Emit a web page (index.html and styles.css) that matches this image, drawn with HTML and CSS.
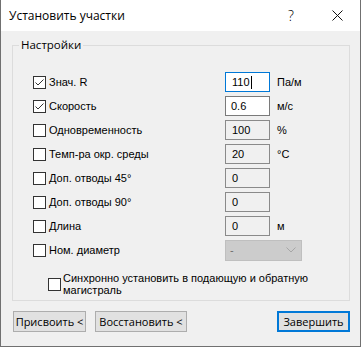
FILE: index.html
```html
<!DOCTYPE html>
<html lang="ru">
<head>
    <meta charset="UTF-8">
    <meta name="viewport" content="width=device-width, initial-scale=1.0">
    <title>Установить участки</title>
    <link rel="stylesheet" href="styles.css">
</head>
<body>

    <div class="window">
        <div class="titlebar">
            <span class="title">Установить участки</span>
            <span class="tbtn help">?</span>
            <span class="tbtn close">
                <svg width="11" height="11" viewBox="0 0 11 11"><path d="M0.5 0.5L10.5 10.5M10.5 0.5L0.5 10.5" stroke="#111" stroke-width="1" fill="none"/></svg>
            </span>
        </div>

        <div class="content">
            <fieldset class="group">
                <legend>Настройки</legend>

                <div class="grid">
                    <label class="check"><span class="box"><svg width="11" height="11" viewBox="0 0 11 11"><polyline points="1.5,5.5 4,8 9.5,2.5" stroke="#333" stroke-width="1" fill="none"/></svg></span>Знач. R</label>
                    <div class="field focused">110<span class="caret"></span></div>
                    <span class="unit">Па/м</span>

                    <label class="check"><span class="box"><svg width="11" height="11" viewBox="0 0 11 11"><polyline points="1.5,5.5 4,8 9.5,2.5" stroke="#333" stroke-width="1" fill="none"/></svg></span>Скорость</label>
                    <div class="field">0.6</div>
                    <span class="unit">м/с</span>

                    <label class="check"><span class="box"></span>Одновременность</label>
                    <div class="field disabled">100</div>
                    <span class="unit">%</span>

                    <label class="check"><span class="box"></span>Темп-ра окр. среды</label>
                    <div class="field disabled">20</div>
                    <span class="unit">°C</span>

                    <label class="check"><span class="box"></span>Доп. отводы 45°</label>
                    <div class="field disabled">0</div>
                    <span class="unit"></span>

                    <label class="check"><span class="box"></span>Доп. отводы 90°</label>
                    <div class="field disabled">0</div>
                    <span class="unit"></span>

                    <label class="check"><span class="box"></span>Длина</label>
                    <div class="field disabled">0</div>
                    <span class="unit">м</span>

                    <label class="check"><span class="box"></span>Ном. диаметр</label>
                    <div class="combo">
                        <span>-</span>
                        <svg width="10" height="6" viewBox="0 0 10 6"><polyline points="0.5,0.5 5,5 9.5,0.5" stroke="#a6a6a6" stroke-width="1" fill="none"/></svg>
                    </div>
                </div>

                <label class="check sync"><span class="box"></span><span class="sync-text">Синхронно установить в подающую и обратную магистраль</span></label>
            </fieldset>

            <div class="buttons">
                <button class="btn assign">Присвоить &lt;</button>
                <button class="btn restore">Восстановить &lt;</button>
                <button class="btn primary">Завершить</button>
            </div>
        </div>
    </div>

</body>
</html>
```

FILE: styles.css
```css
body {
    margin: 0;
    background-color: #f0f0f0;
}

.window {
    width: 361px;
    height: 347px;
    box-sizing: border-box;
    border: 1px solid #707070;
    border-top: none;
    background-color: #f0f0f0;
    font-family: "Liberation Sans", Arial, sans-serif;
    font-size: 11px;
    color: #000;
}

.titlebar {
    height: 31px;
    background-color: #fff;
    display: flex;
    align-items: center;
    padding-left: 8px;
}

.title {
    font-family: "Open Sans", "Noto Sans", sans-serif;
    font-size: 12px;
    margin-right: auto;
}

.tbtn {
    width: 46px;
    height: 31px;
    display: flex;
    align-items: center;
    justify-content: center;
}

.help {
    font-family: "Open Sans", sans-serif;
    font-size: 14px;
    font-weight: 300;
}

.close svg {
    display: block;
}

.content {
    padding: 6px 10px 0 11px;
}

.group {
    margin: 0;
    padding: 19px 0 4px 0;
    border: 1px solid #dcdcdc;
    min-width: 0;
}

.group legend {
    font-family: "Open Sans", "Noto Sans", sans-serif;
    font-size: 11.5px;
    line-height: 16px;
    padding: 0 2px;
    margin-left: 6px;
}

.grid {
    display: grid;
    grid-template-columns: 192px 45px auto;
    grid-auto-rows: 20px;
    row-gap: 4px;
    align-items: center;
    margin-left: 20px;
}

.check {
    display: flex;
    align-items: center;
    gap: 3px;
}

.box {
    width: 13px;
    height: 13px;
    box-sizing: border-box;
    border: 1px solid #333;
    background-color: #fff;
    flex-shrink: 0;
}

.box svg {
    display: block;
}

.field {
    height: 20px;
    box-sizing: border-box;
    border: 1px solid #7a7a7a;
    background-color: #fff;
    padding-left: 5px;
    display: flex;
    align-items: center;
}

.field.focused {
    border-color: #0078d7;
    padding-left: 6px;
}

.field.disabled {
    background-color: #f0f0f0;
    border-color: #8a8a8a;
    padding-left: 6px;
}

.caret {
    display: inline-block;
    width: 1px;
    height: 13px;
    background-color: #000;
    margin-left: 1px;
}

.unit {
    margin-left: 7px;
}

.combo {
    grid-column: 2 / 4;
    width: 77px;
    height: 21px;
    box-sizing: border-box;
    border: 1px solid #bfbfbf;
    background-color: #cccccc;
    color: #6d6d6d;
    display: flex;
    align-items: center;
    justify-content: space-between;
    padding: 0 5px 0 4px;
}

.sync {
    margin: 12px 0 0 35px;
    gap: 2px;
}

.sync-text {
    width: 262px;
    line-height: 12px;
}

.buttons {
    display: flex;
    gap: 9px;
    margin: 10px 0 0 1px;
}

.btn {
    height: 21px;
    box-sizing: border-box;
    border: 1px solid #adadad;
    background-color: #e1e1e1;
    font-family: "Open Sans", "Noto Sans", sans-serif;
    font-size: 11px;
    padding: 0;
    color: #000;
}

.assign {
    width: 73px;
}

.restore {
    width: 92px;
}

.primary {
    width: 73px;
    margin-left: auto;
    border: 2px solid #0078d7;
}
```
